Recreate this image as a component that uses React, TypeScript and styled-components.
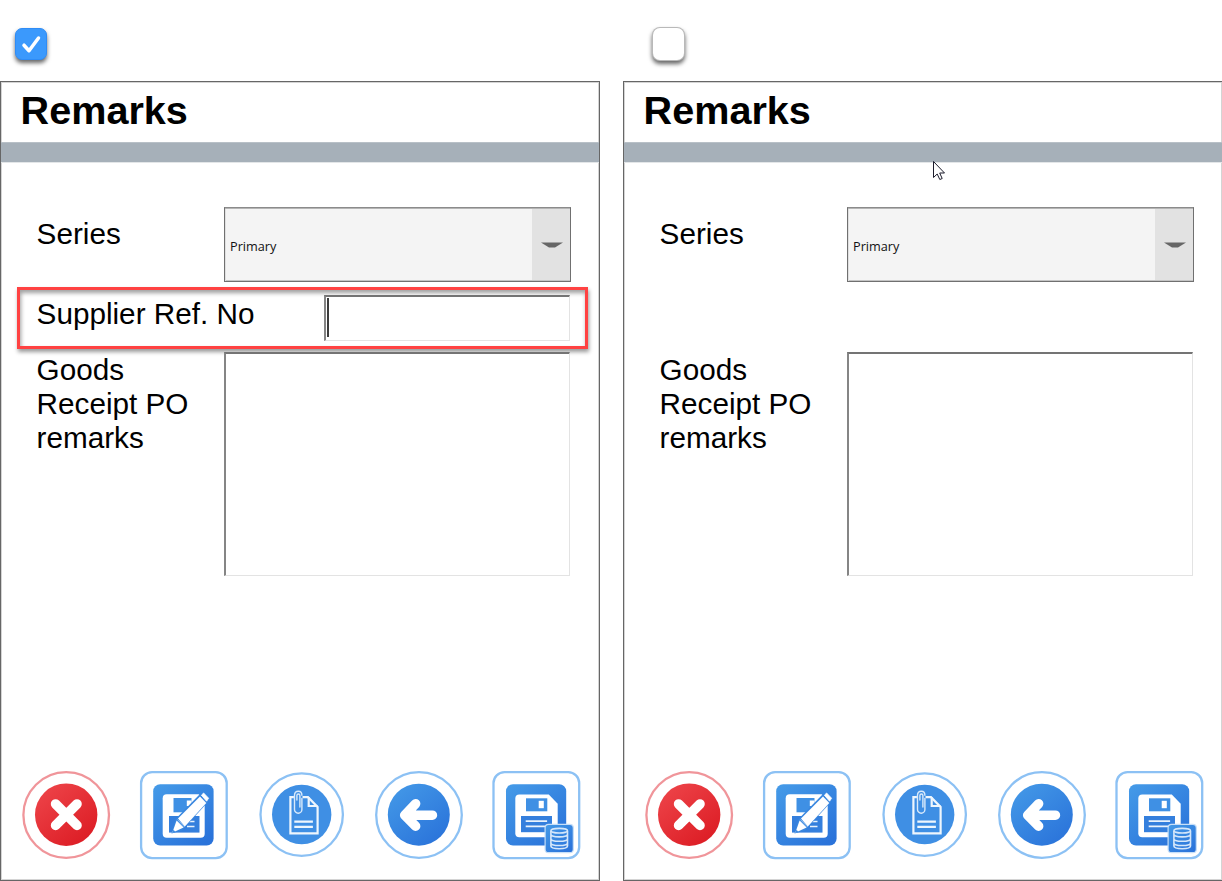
import React from 'react';
import styled, { createGlobalStyle, css } from 'styled-components';

const GlobalStyle = createGlobalStyle`
  * { box-sizing: border-box; }
  html, body { margin: 0; background: #fff; overflow: hidden; }
  body { font-family: "Liberation Sans", Arial, sans-serif; color: #000; }
`;

const Page = styled.main`
  display: grid;
  grid-template-columns: 600px 600px;
  column-gap: 23px;
  width: 1222px;
  height: 881px;
  overflow: hidden;
`;

const Column = styled.section`
  display: flex;
  flex-direction: column;
`;

const CheckRow = styled.div<{ $indent: number }>`
  display: flex;
  height: 81px;
  padding: 28px 0 0 ${(p) => p.$indent}px;
`;

const CheckBox = styled.span<{ $checked: boolean }>`
  display: flex;
  width: 32px;
  height: 32px;
  border-radius: 7px;
  ${(p) =>
    p.$checked
      ? css`
          background: #3b99fc;
          border: 1px solid #2f8cf6;
          box-shadow: 0 3px 4px rgba(0, 0, 0, 0.6);
        `
      : css`
          width: 31px;
          background: #fff;
          box-shadow: 0 0 0 1px #b9b9b9, 0 3px 4px 1px rgba(0, 0, 0, 0.6);
        `}
`;

const Panel = styled.div`
  display: flex;
  flex-direction: column;
  height: 800px;
  border: 1px solid #666;
  box-shadow: inset 0 0 0 1px #d4d4d4;
`;

const Title = styled.h1`
  margin: 0;
  height: 60px;
  padding-left: 19.6px;
  font-size: 39.6px;
  line-height: 56px;
  font-weight: 700;
`;

const Stripe = styled.div`
  height: 20px;
  background: #a6b0b9;
  box-shadow: inset 0 1px #b8c0c7, 0 1px #e3e6e8;
`;

const Form = styled.div`
  display: flex;
  flex-direction: column;
  flex: 1;
  padding-top: 45px;
`;

const Row = styled.div<{ $height: number; $gap: number }>`
  display: flex;
  height: ${(p) => p.$height}px;
  margin-bottom: ${(p) => p.$gap}px;
  padding-left: 35px;
`;

const Label = styled.label<{ $width: number; $top: number }>`
  width: ${(p) => p.$width}px;
  padding: ${(p) => p.$top}px 0 0 0.6px;
  font-size: 29.7px;
  line-height: 34px;
`;

const Select = styled.div`
  display: flex;
  width: 347px;
  height: 75px;
  border: 1px solid #707070;
  border-top: 1px solid #8b8b8b;
  box-shadow: inset 0 1px #b5b5b5, inset 1px 0 #e0e0e0, inset 0 -1px #c4c4c4;
  background: #f4f4f4;
`;

const SelectValue = styled.span`
  flex: 1;
  padding-left: 5px;
  font: 12.7px/76px "Open Sans", "Noto Sans", sans-serif;
  color: #111;
`;

const SelectButton = styled.span`
  display: flex;
  align-items: center;
  justify-content: center;
  width: 38px;
  margin: 1px 0;
  padding-left: 1px;
  background: #e2e2e2;
`;

const inset = css`
  border: 1px solid #e3e3e3;
  border-top: 2px solid #747474;
  border-left: 2px solid #858585;
  background: #fff;
`;

const Highlight = styled.div`
  display: flex;
  width: 571px;
  height: 62px;
  margin: 0 0 3px 16px;
  padding-left: 16px;
  border: 3px solid #ff4242;
  box-shadow: 1px 3px 4px rgba(0, 0, 0, 0.4), inset 1px 3px 4px rgba(0, 0, 0, 0.38);
`;

const Input = styled.div`
  ${inset}
  width: 246px;
  height: 46px;
  margin-top: 5px;
  padding: 1px 0 0 1px;
`;

const Caret = styled.span`
  display: block;
  width: 2px;
  height: 39px;
  background: #3c3c3c;
`;

const TextArea = styled.div`
  ${inset}
  width: 346px;
  height: 224px;
`;

const Toolbar = styled.footer`
  display: flex;
  justify-content: space-between;
  padding: 0 17px 19px 19px;
`;

const ToolIcon = styled.svg`
  display: block;
  width: 92px;
  height: 92px;
`;

const Pointer = styled.svg`
  position: absolute;
  left: 932px;
  top: 160px;
  width: 14px;
  height: 22px;
`;

function Gradients({ id }: { id: string }) {
  return (
    <defs>
      <linearGradient id={`${id}-blue`} x1="0" y1="0" x2="0.8" y2="1">
        <stop offset="0" stopColor="#459be8" />
        <stop offset="1" stopColor="#2a73da" />
      </linearGradient>
      <linearGradient id={`${id}-red`} x1="0" y1="0" x2="0.8" y2="1">
        <stop offset="0" stopColor="#ef474c" />
        <stop offset="1" stopColor="#dc1c24" />
      </linearGradient>
    </defs>
  );
}

function CloseIcon({ id }: { id: string }) {
  return (
    <ToolIcon viewBox="20 769 92 92">
      <Gradients id={id} />
      <circle cx="66.2" cy="815" r="42.8" fill="#fff" stroke="#f0959a" strokeWidth="2.3" />
      <circle cx="66.2" cy="814.7" r="31.2" fill={`url(#${id}-red)`} />
      <path d="M55.6 804l21.4 21.4M77 804l-21.4 21.4" stroke="#fff" strokeWidth="9.6" strokeLinecap="round" />
    </ToolIcon>
  );
}

function SaveEditIcon({ id }: { id: string }) {
  const fill = `url(#${id}-blue)`;
  return (
    <ToolIcon viewBox="138 769 92 92">
      <Gradients id={id} />
      <rect x="141.1" y="772.1" width="85.6" height="86" rx="11" fill="#fff" stroke="#8cc1f4" strokeWidth="2.3" />
      <rect x="153.2" y="784.2" width="60.4" height="61.4" rx="7" fill={fill} />
      <path d="M166.7 794.3h32l6 6v33.4a4 4 0 0 1-4 4h-34a4 4 0 0 1-4-4v-35.4a4 4 0 0 1 4-4z" fill="#fff" />
      <path d="M173.5 798h18v14.3h-18z" fill="#3f90e4" />
      <path d="M186.8 800.5h4.7v5.5h-4.7z" fill="#fff" />
      <path d="M169 816h30.5v16.6H169z" fill="#347fdd" />
      <path d="M187 821.5h7.5M187 826.5h7.5" stroke="#e8f2fc" strokeWidth="1.7" />
      <path d="M171.5 833.5l4-14.5 24-24.5 4.5-1.5 5 5.5-1.5 4-25.5 28z" fill="#3886df" />
      <path d="M172.3 832.8l4.3-12.3 7 7z" fill="#fff" />
      <path d="M178 818.5L200 796.5l6.3 6.5-21.5 23.5z" fill="#fff" />
      <path d="M201.4 795.2l2.2-2.2 5 5.2-2 3z" fill="#fff" stroke="#fff" strokeWidth=".8" strokeLinejoin="round" />
      <path d="M172.3 832.8l1.2-3 1.8 1.9z" fill="#3a8ae1" />
      <path d="M177.4 819.5l7.2 7.5" stroke="#a9cef3" strokeWidth=".8" />
    </ToolIcon>
  );
}

function AttachmentIcon() {
  return (
    <ToolIcon viewBox="255 769 92 92">
      <circle cx="301.7" cy="814.6" r="41.2" fill="#fff" stroke="#8cc1f4" strokeWidth="2.3" />
      <circle cx="301.7" cy="814.5" r="29.7" fill="#3f8fe4" />
      <g fill="none" stroke="#eef6fd" strokeWidth="2.2">
        <path d="M302.5 797.2H308l9.6 9.8v26.3H290.4V797.2h3.5" />
        <path d="M308.7 797.2v8.8h8.8" />
        <path d="M294.3 821.6h18.6M294.3 826.8h18.6" />
      </g>
      <path d="M301.9 798.5v11a3.7 3.7 0 0 1-7.4 0V795.3c0-2.5 1.6-4.1 3.9-4.1s3.5 1.6 3.5 4.1M296.9 800v-4.5c0-2 3-2 3 0v11.5" fill="none" stroke="#d9eafb" strokeWidth="1.4" strokeLinecap="round" />
    </ToolIcon>
  );
}

function BackIcon({ id }: { id: string }) {
  return (
    <ToolIcon viewBox="373 769 92 92">
      <Gradients id={id} />
      <circle cx="419" cy="815" r="42.8" fill="#fff" stroke="#8cc1f4" strokeWidth="2.3" />
      <circle cx="418.8" cy="814.7" r="31" fill={`url(#${id}-blue)`} />
      <path d="M415.6 803.7L404.7 815.2l10.9 11M406 815.2h26.4" fill="none" stroke="#fff" strokeWidth="9.6" strokeLinecap="round" strokeLinejoin="round" />
    </ToolIcon>
  );
}

function SaveDataIcon({ id }: { id: string }) {
  const fill = `url(#${id}-blue)`;
  return (
    <ToolIcon viewBox="490 769 92 92">
      <Gradients id={id} />
      <rect x="493.5" y="772.1" width="85.7" height="86" rx="11" fill="#fff" stroke="#8cc1f4" strokeWidth="2.3" />
      <rect x="506" y="784.2" width="60.2" height="61.4" rx="7" fill={fill} />
      <path d="M519.3 794.5h29.5l8.9 9.2v29.6a4 4 0 0 1-4 4h-34.4a4 4 0 0 1-4-4v-34.8a4 4 0 0 1 4-4z" fill="#fff" />
      <path d="M526 798.3h21.3v13H526z" fill="#3f90e4" />
      <path d="M538.7 800.8h5.1v7.4h-5.1z" fill="#fff" />
      <path d="M521 816h31v16.2h-31z" fill="#347fdd" />
      <path d="M525.7 821.2h21.4M525.7 826.3h21.4" stroke="#e8f2fc" strokeWidth="1.7" />
      <rect x="545.1" y="824.4" width="28.2" height="28.3" rx="3.5" fill={fill} stroke="#c7dff8" strokeWidth="1.2" />
      <g fill="none" stroke="#d5e7fa" strokeWidth="1.6">
        <ellipse cx="559.2" cy="830.7" rx="8.3" ry="2.3" />
        <path d="M550.9 831v3.3c0 3.4 16.6 3.4 16.6 0V831M550.9 834v4.7c0 3.4 16.6 3.4 16.6 0V834M550.9 838v5c0 3.4 16.6 3.4 16.6 0v-5M550.9 842v4c0 3.6 16.6 3.6 16.6 0v-4" />
      </g>
    </ToolIcon>
  );
}

function RemarksScreen({ id, supplierRef }: { id: string; supplierRef: boolean }) {
  return (
    <Panel>
      <Title>Remarks</Title>
      <Stripe />
      <Form>
        <Row $height={75} $gap={5}>
          <Label $width={188} $top={10}>Series</Label>
          <Select>
            <SelectValue>Primary</SelectValue>
            <SelectButton>
              <svg width="22" height="6" viewBox="0 0 22 6">
                <path d="M0 .5h22L14 5.5H8z" fill="#666" />
              </svg>
            </SelectButton>
          </Select>
        </Row>
        {supplierRef ? (
          <Highlight>
            <Label $width={288} $top={7}>Supplier Ref. No</Label>
            <Input>
              <Caret />
            </Input>
          </Highlight>
        ) : (
          <Row $height={62} $gap={3} />
        )}
        <Row $height={224} $gap={0}>
          <Label $width={188} $top={1}>
            Goods
            <br />
            Receipt PO
            <br />
            remarks
          </Label>
          <TextArea />
        </Row>
      </Form>
      <Toolbar>
        <CloseIcon id={`${id}-close`} />
        <SaveEditIcon id={`${id}-edit`} />
        <AttachmentIcon />
        <BackIcon id={`${id}-back`} />
        <SaveDataIcon id={`${id}-data`} />
      </Toolbar>
    </Panel>
  );
}

export default function App() {
  return (
    <>
      <GlobalStyle />
      <Page>
        <Column>
          <CheckRow $indent={15}>
            <CheckBox $checked>
              <svg width="30" height="30" viewBox="0 0 30 30">
                <path d="M8 16.2l5 5.5L22.5 9" fill="none" stroke="#fff" strokeWidth="3.5" strokeLinecap="round" strokeLinejoin="round" />
              </svg>
            </CheckBox>
          </CheckRow>
          <RemarksScreen id="left" supplierRef />
        </Column>
        <Column>
          <CheckRow $indent={30}>
            <CheckBox $checked={false} />
          </CheckRow>
          <RemarksScreen id="right" supplierRef={false} />
        </Column>
      </Page>
      <Pointer viewBox="0 0 14 22">
        <path d="M1.5 1.5v16l3.7-3.5 2.6 5.5 2.4-1-2.5-5.5h4.8z" fill="#fff" stroke="#1b1b2b" strokeWidth="1" />
      </Pointer>
    </>
  );
}
